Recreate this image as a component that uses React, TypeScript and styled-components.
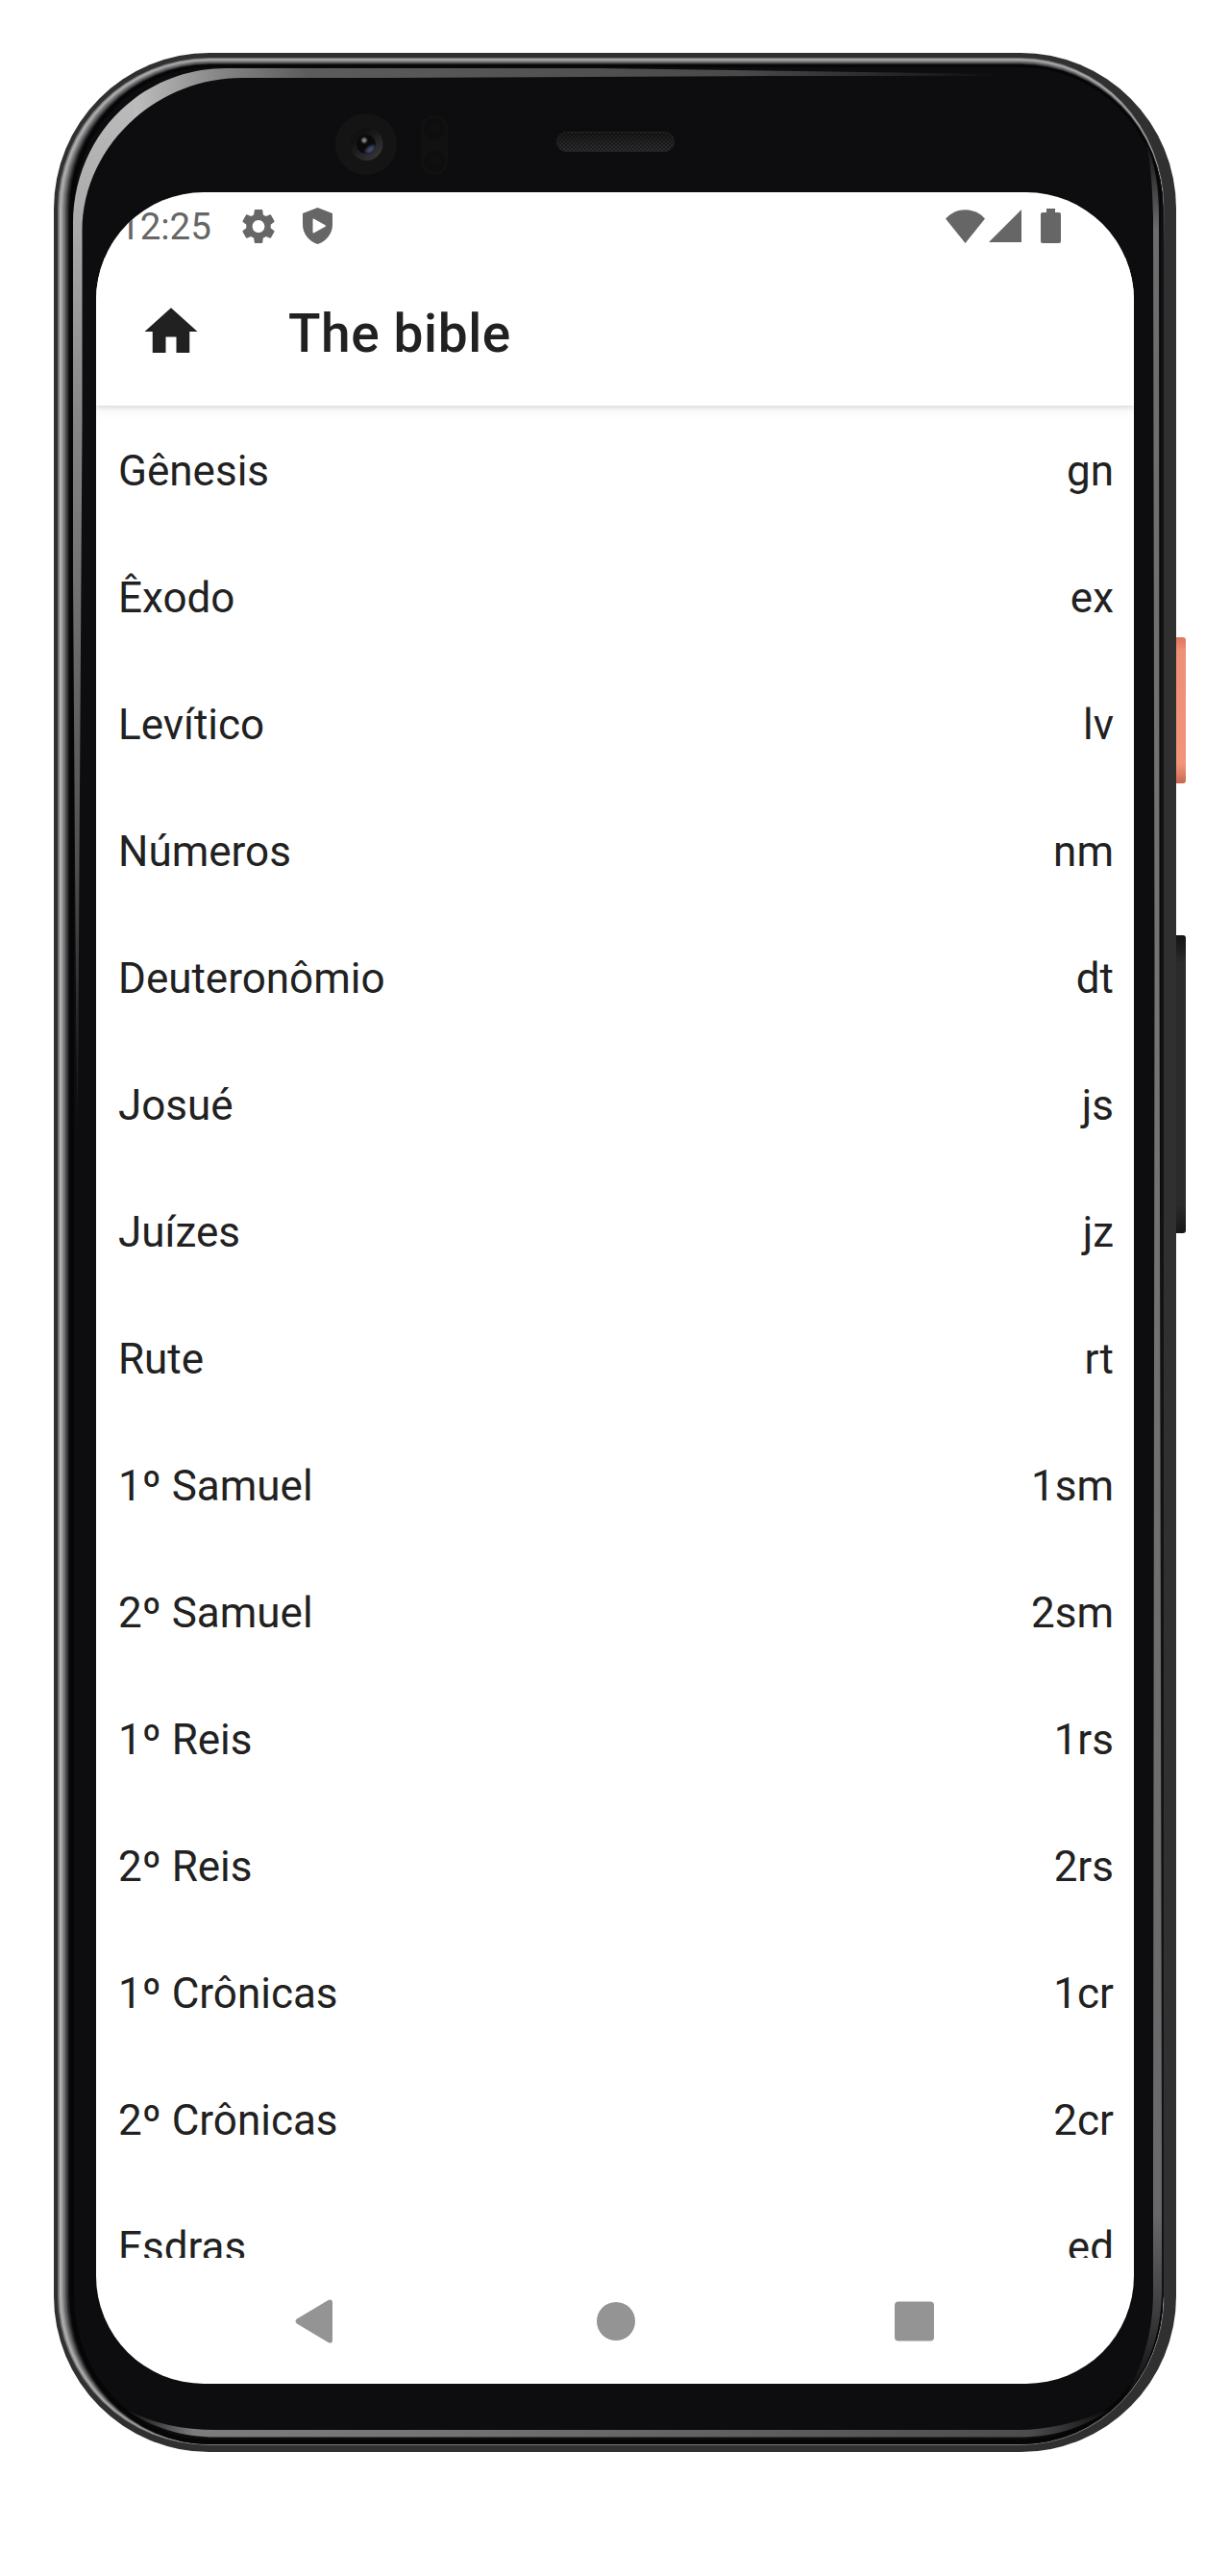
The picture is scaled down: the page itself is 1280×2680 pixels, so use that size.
import React from 'react';
import styled, { createGlobalStyle } from 'styled-components';

const GlobalStyle = createGlobalStyle`
  * { box-sizing: border-box; }
  body { margin: 0; background: #fff; font-family: Roboto, "Noto Sans", sans-serif; }
`;

const Stage = styled.main`
  width: 1280px;
  height: 2680px;
  padding: 55px 56px;
  background: #fff;
  overflow: hidden;
`;

const Phone = styled.div`
  position: relative;
  width: 1168px;
  height: 2496px;
  padding: 145px 44px 71px;
`;

const Bezel = styled.svg`
  position: absolute;
  left: -56px;
  top: -55px;
  pointer-events: none;
`;

const SideButton = styled.div<{ $top: number; $height: number; $paint: string }>`
  position: absolute;
  left: 1168px;
  top: ${p => p.$top}px;
  width: 10px;
  height: ${p => p.$height}px;
  border-radius: 0 3px 3px 0;
  background: ${p => p.$paint};
`;

const Screen = styled.section`
  position: relative;
  display: flex;
  flex-direction: column;
  width: 1080px;
  height: 2280px;
  border-radius: 112px;
  background: #fff;
  overflow: hidden;
`;

const StatusBar = styled.div`
  display: flex;
  align-items: center;
  flex: 0 0 66px;
  padding: 2px 76px 0 24px;
  color: #666;
`;

const Clock = styled.span`
  width: 96px;
  padding-top: 2px;
  font-size: 38.5px;
  line-height: 64px;
`;

const StatusIcon = styled.svg<{ $w: number; $h: number; $gap: number }>`
  display: block;
  flex: none;
  width: ${p => p.$w}px;
  height: ${p => p.$h}px;
  margin-left: ${p => p.$gap}px;
  fill: currentColor;
`;

const StatusEnd = styled.div`
  display: flex;
  align-items: center;
  margin-left: auto;
`;

const AppBar = styled.header`
  position: relative;
  z-index: 1;
  display: flex;
  align-items: center;
  flex: 0 0 154px;
  padding-left: 45px;
  background: #fff;
  box-shadow: 0 2px 5px rgba(0, 0, 0, 0.12), 0 4px 14px rgba(0, 0, 0, 0.05);
  clip-path: inset(0 0 -24px 0);
`;

const HomeIcon = styled.svg`
  width: 66px;
  height: 66px;
  fill: #212121;
`;

const Title = styled.h1`
  margin: 4px 0 0 89px;
  color: #212121;
  font-size: 55px;
  font-weight: 500;
  line-height: 64px;
  letter-spacing: 0.6px;
`;

const BookList = styled.ul`
  flex: 1 1 0;
  min-height: 0;
  margin: 0;
  padding: 2px 21px 0 23px;
  list-style: none;
  overflow: hidden;
`;

const Book = styled.li`
  display: flex;
  align-items: center;
  justify-content: space-between;
  height: 132px;
  color: #212121;
  font-size: 44px;
  line-height: 52px;
`;

const NavBar = styled.nav`
  display: flex;
  align-items: center;
  justify-content: space-between;
  flex: 0 0 131px;
  padding: 0 207px;
`;

const NavIcon = styled.svg`
  width: 42px;
  height: 46px;
  fill: #949494;
`;

const books: [string, string][] = [
  ['Gênesis', 'gn'],
  ['Êxodo', 'ex'],
  ['Levítico', 'lv'],
  ['Números', 'nm'],
  ['Deuteronômio', 'dt'],
  ['Josué', 'js'],
  ['Juízes', 'jz'],
  ['Rute', 'rt'],
  ['1º Samuel', '1sm'],
  ['2º Samuel', '2sm'],
  ['1º Reis', '1rs'],
  ['2º Reis', '2rs'],
  ['1º Crônicas', '1cr'],
  ['2º Crônicas', '2cr'],
  ['Esdras', 'ed'],
];

/* Rounded outline whose four corners meet at shared curvature centres. */
const shell = (l: number, t: number, r: number, b: number) => {
  const x1 = 218, x2 = 1062, y1 = 217, y2 = 2389;
  return `M${l} ${y1}A${x1 - l} ${y1 - t} 0 0 1 ${x1} ${t}H${x2}A${r - x2} ${y1 - t} 0 0 1 ${r} ${y1}V${y2}A${r - x2} ${b - y2} 0 0 1 ${x2} ${b}H${x1}A${x1 - l} ${b - y2} 0 0 1 ${l} ${y2}Z`;
};

/* Metal rim tones, from the outside edge inwards: [left, top, right, bottom, colour] */
const rim: [number, number, number, number, string][] = [
  [56, 55, 1224, 2551, '#303030'],
  [60, 60, 1211.5, 2544, '#6e6e70'],
  [61, 60.7, 1211, 2543.4, '#858585'],
  [62, 61.4, 1210.8, 2543, '#b0b0b0'],
  [63.5, 62.2, 1210.6, 2543, '#a2a2a3'],
  [65, 63, 1210.4, 2543, '#868688'],
  [66.5, 64, 1210.4, 2543, '#6c6c6e'],
  [68, 65, 1210.4, 2543, '#505052'],
  [69.5, 66, 1210.4, 2543, '#303032'],
  [71, 66.7, 1210.4, 2543, '#171718'],
  [72.5, 67.3, 1210.4, 2543, '#060607'],
  [77, 70, 1207.5, 2538, '#0d0d0f'],
];

const gleam =
  'M80 1180L76 600V233C76 142 146 71 236 71H620L1040 77V79L800 79L400 81H252C160 81 85.500 155 85.500 240V440L82.500 900L81 1180Z';

function Frame() {
  return (
    <Bezel width="1280" height="2680" viewBox="0 0 1280 2680">
      <defs>
        <linearGradient id="gLeft" gradientUnits="userSpaceOnUse" x1="0" y1="90" x2="0" y2="1180">
          <stop offset="0" stopColor="#bdbdbd" />
          <stop offset="0.14" stopColor="#a8a8a8" />
          <stop offset="0.32" stopColor="#858585" />
          <stop offset="0.74" stopColor="#505050" />
          <stop offset="1" stopColor="#0d0d0f" />
        </linearGradient>
        <linearGradient id="gTop" gradientUnits="userSpaceOnUse" x1="140" y1="0" x2="1040" y2="0">
          <stop offset="0" stopColor="#bdbdbd" />
          <stop offset="0.1" stopColor="#858585" />
          <stop offset="0.2" stopColor="#5c5c5c" />
          <stop offset="0.7" stopColor="#4a4a4a" />
          <stop offset="1" stopColor="#0d0d0f" />
        </linearGradient>
        <linearGradient id="gRight" gradientUnits="userSpaceOnUse" x1="0" y1="145" x2="0" y2="2490">
          <stop offset="0" stopColor="#0d0d0f" />
          <stop offset="0.04" stopColor="#6c6c6e" />
          <stop offset="0.4" stopColor="#747474" />
          <stop offset="0.92" stopColor="#68686a" />
          <stop offset="0.965" stopColor="#3c3c3e" />
          <stop offset="1" stopColor="#0d0d0f" />
        </linearGradient>
        <linearGradient id="gBottom" gradientUnits="userSpaceOnUse" x1="130" y1="0" x2="1155" y2="0">
          <stop offset="0" stopColor="#0d0d0f" />
          <stop offset="0.07" stopColor="#7c7c7c" />
          <stop offset="0.3" stopColor="#747474" />
          <stop offset="0.7" stopColor="#5a5a5a" />
          <stop offset="0.92" stopColor="#4c4c4c" />
          <stop offset="1" stopColor="#0d0d0f" />
        </linearGradient>
        <linearGradient id="edgeShade" gradientUnits="userSpaceOnUse" x1="0" y1="190" x2="0" y2="2400">
          <stop offset="0" stopColor="#121213" stopOpacity="0" />
          <stop offset="0.03" stopColor="#121213" />
          <stop offset="1" stopColor="#121213" />
        </linearGradient>
        <linearGradient id="lensRing" x1="0" y1="0" x2="0.8" y2="1">
          <stop offset="0.3" stopColor="#111" />
          <stop offset="1" stopColor="#37373b" />
        </linearGradient>
        <linearGradient id="slotFade" x1="0" y1="0" x2="0" y2="1">
          <stop offset="0" stopColor="#0d0d0f" stopOpacity="0.6" />
          <stop offset="1" stopColor="#2c2c2c" stopOpacity="0.5" />
        </linearGradient>
        <radialGradient id="glint">
          <stop offset="0.2" stopColor="#8a8a8a" />
          <stop offset="1" stopColor="#8a8a8a" stopOpacity="0" />
        </radialGradient>
        <radialGradient id="blueGlint">
          <stop offset="0.3" stopColor="#3c4566" />
          <stop offset="1" stopColor="#3c4566" stopOpacity="0" />
        </radialGradient>
        <pattern id="mesh" width="4" height="4" patternUnits="userSpaceOnUse">
          <rect width="4" height="4" fill="#0f0f0f" />
          <rect width="2" height="2" fill="#2d2d2d" />
          <rect x="2" y="2" width="2" height="2" fill="#2d2d2d" />
        </pattern>
        <clipPath id="leftHalf"><rect x="0" y="0" width="140" height="1300" /></clipPath>
        <clipPath id="topHalf"><rect x="140" y="0" width="1000" height="200" /></clipPath>
        <clipPath id="lensClip"><circle cx="381" cy="150" r="10" /></clipPath>
      </defs>

      {rim.map(([l, t, r, b, colour]) => (
        <path key={l} d={shell(l, t, r, b)} fill={colour} />
      ))}
      <rect x="1208" y="200" width="3.500" height="2190" fill="url(#edgeShade)" />

      <path d={gleam} fill="url(#gLeft)" clipPath="url(#leftHalf)" />
      <path d={gleam} fill="url(#gTop)" clipPath="url(#topHalf)" />
      <path
        d="M1192 145C1202 170 1206 195 1206 225L1206.500 1000L1209 2240V2385C1208 2430 1195 2465 1172 2491C1190 2460 1200 2425 1200 2385V2240L1201.500 1000L1200 225C1199 195 1198 170 1192 145Z"
        fill="url(#gRight)"
      />
      <path
        d="M130 2506C160 2522 190 2528 225 2528H1060C1090 2528 1125 2520 1156 2506C1128 2526 1096 2535.500 1060 2535.500H225C190 2535.500 158 2526 130 2506Z"
        fill="url(#gBottom)"
      />

      <circle cx="381" cy="150" r="32" fill="#141414" />
      <circle cx="381.500" cy="150" r="17" fill="url(#lensRing)" />
      <circle cx="381" cy="150" r="10" fill="#0a0a0c" />
      <g clipPath="url(#lensClip)">
        <ellipse cx="385.500" cy="155.500" rx="8.500" ry="5" fill="url(#blueGlint)" transform="rotate(-35 385.500 155.500)" />
      </g>
      <circle cx="379" cy="146" r="4" fill="url(#glint)" />

      <rect x="438" y="120" width="28" height="62" rx="14" fill="#111112" />
      <circle cx="452" cy="134" r="11" fill="#0e0e0f" />
      <circle cx="453" cy="133" r="5" fill="#101011" />
      <circle cx="452" cy="168" r="11" fill="#0e0e0f" />
      <circle cx="453" cy="166" r="5" fill="#101011" />

      <rect x="579.500" y="137.500" width="122" height="20" rx="10" fill="url(#mesh)" />
      <rect x="579.500" y="137.500" width="122" height="20" rx="10" fill="url(#slotFade)" stroke="#232323" />
    </Bezel>
  );
}

function Status() {
  return (
    <StatusBar>
      <Clock>12:25</Clock>
      <StatusIcon $w={34} $h={35} $gap={32} viewBox="2.400 2.400 19.200 19.200" preserveAspectRatio="none">
        <path d="M19.140 12.940c.040-.300.060-.610.060-.940 0-.320-.020-.640-.070-.940l2.030-1.580c.180-.140.230-.410.120-.610l-1.920-3.320c-.120-.220-.370-.290-.590-.220l-2.390.960c-.500-.380-1.030-.700-1.620-.940l-.360-2.540c-.040-.240-.240-.410-.480-.410h-3.840c-.240 0-.430.170-.470.410l-.360 2.540c-.590.240-1.130.570-1.620.940l-2.390-.960c-.220-.080-.470 0-.590.220L2.740 8.870c-.120.210-.080.470.120.610l2.030 1.580c-.050.300-.090.630-.090.940s.020.640.070.940l-2.030 1.580c-.180.140-.230.410-.120.610l1.920 3.320c.120.220.370.290.590.220l2.390-.960c.500.380 1.030.700 1.620.940l.360 2.540c.050.240.240.410.480.410h3.840c.240 0 .440-.170.470-.410l.360-2.540c.590-.240 1.130-.560 1.620-.940l2.390.960c.220.080.470 0 .590-.220l1.920-3.320c.120-.220.070-.470-.120-.610l-2.010-1.580zM12 15.600c-1.980 0-3.600-1.620-3.600-3.600s1.620-3.600 3.600-3.600 3.600 1.620 3.600 3.600-1.620 3.600-3.600 3.600z" />
      </StatusIcon>
      <StatusIcon $w={31} $h={38} $gap={29} viewBox="0 0 31 38">
        <path fillRule="evenodd" d="M15.500 0L31 6V18C31 27 24.500 35 15.500 38C6.500 35 0 27 0 18V6ZM10.500 12.500V25.500Q10.500 26.800 11.800 26.200L23.500 19.800Q24.800 19 23.500 18.200L11.800 11.800Q10.500 11.200 10.500 12.500Z" />
      </StatusIcon>
      <StatusEnd>
        <StatusIcon $w={41} $h={35} $gap={0} viewBox="0 0 41 35">
          <path d="M0 9.500C11 -3 30 -3 41 9.500L20.500 35Z" />
        </StatusIcon>
        <StatusIcon $w={34} $h={34} $gap={4} viewBox="0 0 34 34">
          <path d="M34 0V34H0Z" />
        </StatusIcon>
        <StatusIcon $w={21} $h={36} $gap={20} viewBox="0 0 21 36">
          <path d="M6 0H15V4H19A2 2 0 0 1 21 6V34A2 2 0 0 1 19 36H2A2 2 0 0 1 0 34V6A2 2 0 0 1 2 4H6Z" />
        </StatusIcon>
      </StatusEnd>
    </StatusBar>
  );
}

export default function App() {
  return (
    <>
      <GlobalStyle />
      <Stage>
        <Phone>
          <Frame />
          <SideButton $top={608} $height={152} $paint="linear-gradient(#e0745c, #ee9077 14px, #f2937a 132px, #e07f67 142px, #c4664f)" />
          <SideButton $top={918} $height={310} $paint="linear-gradient(#141414, #2b2b2b 30px, #2b2b2b 280px, #171717)" />
          <Screen>
            <Status />
            <AppBar>
              <HomeIcon viewBox="0 0 24 24">
                <path d="M10 20v-6h4v6h5v-8h3L12 3 2 12h3v8z" />
              </HomeIcon>
              <Title>The bible</Title>
            </AppBar>
            <BookList>
              {books.map(([name, abbrev]) => (
                <Book key={name}>
                  <span>{name}</span>
                  <span>{abbrev}</span>
                </Book>
              ))}
            </BookList>
            <NavBar>
              <NavIcon viewBox="0 0 42 46">
                <path d="M2 20.500L35 .800Q39 -.500 39 3V43Q39 46.500 35 45.200L2 25.500Q-1 23 2 20.500Z" />
              </NavIcon>
              <NavIcon viewBox="0 0 42 46">
                <circle cx="22" cy="23" r="20" />
              </NavIcon>
              <NavIcon viewBox="0 0 42 46">
                <rect x="0" y="2.500" width="41" height="41" rx="4" />
              </NavIcon>
            </NavBar>
          </Screen>
        </Phone>
      </Stage>
    </>
  );
}
